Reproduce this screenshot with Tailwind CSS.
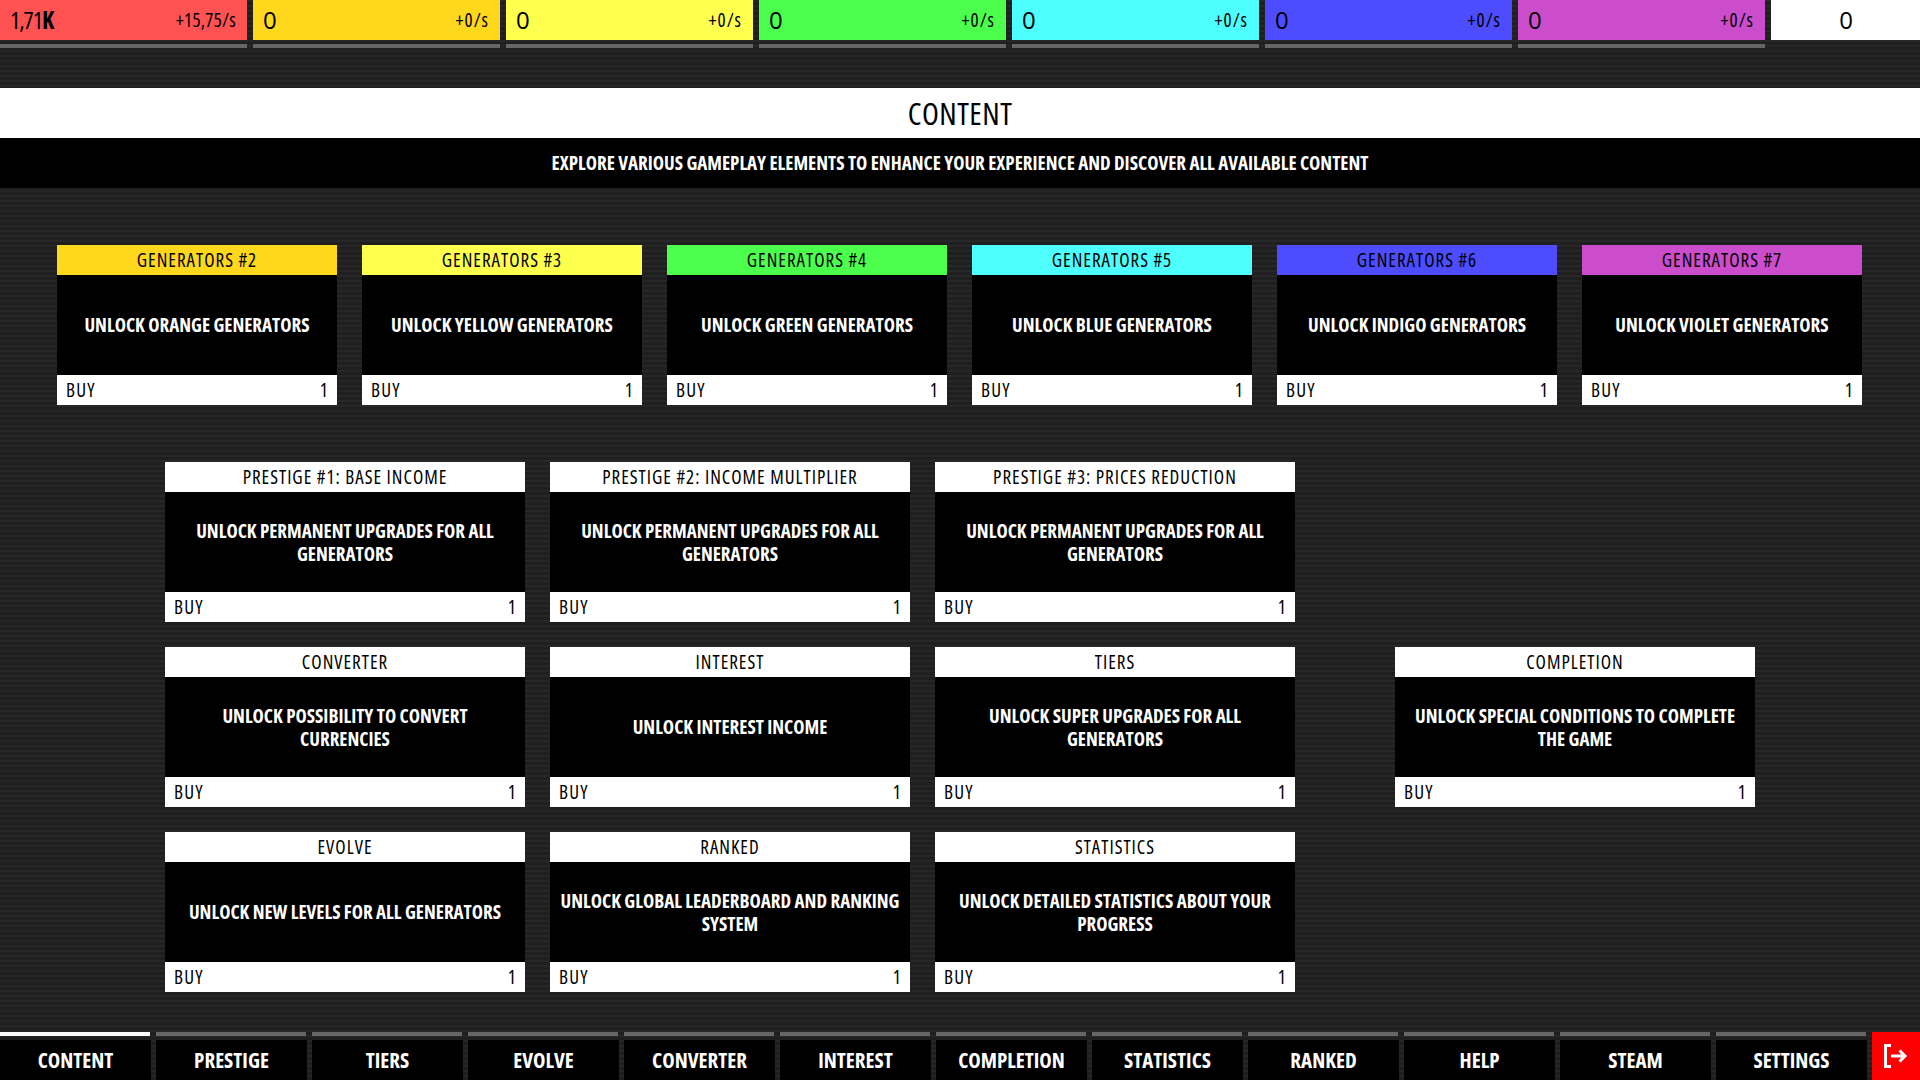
<!DOCTYPE html>
<html lang="en">
<head>
  <meta charset="UTF-8" />
  <meta name="viewport" content="width=device-width, initial-scale=1.0"/>
  <title>Content</title>
  <script src="https://cdn.jsdelivr.net/npm/@tailwindcss/browser@4"></script>
</head>
<body class="w-[1920px] h-[1080px] overflow-hidden flex flex-col bg-[#232323] bg-[repeating-linear-gradient(0deg,#1f1f1f_0px,#1f1f1f_3px,#272727_3px,#272727_5px)] font-['Open_Sans',sans-serif] [font-stretch:75%] text-black">
  <!-- currencies -->
  <div id="currencies" class="flex gap-[6px] h-[48px] overflow-hidden shrink-0"></div>

  <!-- title -->
  <div class="mt-[40px] h-[50px] bg-white flex items-center justify-center text-[31px] tracking-[0.5px]">CONTENT</div>
  <div class="h-[50px] bg-black text-white flex items-center justify-center text-[19px] font-bold">EXPLORE VARIOUS GAMEPLAY ELEMENTS TO ENHANCE YOUR EXPERIENCE AND DISCOVER ALL AVAILABLE CONTENT</div>

  <!-- generators -->
  <div id="generators" class="mt-[57px] pr-px flex justify-center gap-[25px]"></div>

  <div class="mt-[57px] flex justify-center gap-[100px]">
    <div id="upgrades" class="grid grid-cols-3 gap-[25px]"></div>
    <div id="side" class="pt-[185px]"></div>
  </div>

  <!-- tabs -->
  <div class="mt-auto flex h-[48px]">
    <div id="tabs" class="flex"></div>
    <div class="w-[48px] bg-[#ff0000] flex items-center justify-center">
      <svg class="w-[24px] h-[24px]" viewBox="0 0 24 24" fill="none" stroke="#ffffff" stroke-width="3">
        <path d="M7 1.5H1.5V22.5H7"/>
        <path d="M7 12H21M15.5 6.5L21 12L15.5 17.5"/>
      </svg>
    </div>
  </div>

  <script>
    const currencies = [
      ['1,71<b>K</b>', '+15,75/s', 'bg-[#ff5252]', 'tracking-[-1px]', 'tracking-[0.3px]'],
      ['0', '+0/s', 'bg-[#ffd71c]', '[font-stretch:100%]', 'tracking-[1px]'],
      ['0', '+0/s', 'bg-[#ffff4d]', '[font-stretch:100%]', 'tracking-[1px]'],
      ['0', '+0/s', 'bg-[#4dff4d]', '[font-stretch:100%]', 'tracking-[1px]'],
      ['0', '+0/s', 'bg-[#4dffff]', '[font-stretch:100%]', 'tracking-[1px]'],
      ['0', '+0/s', 'bg-[#4d4dff]', '[font-stretch:100%]', 'tracking-[1px]'],
      ['0', '+0/s', 'bg-[#cc4dcc]', '[font-stretch:100%]', 'tracking-[1px]']
    ];
    document.getElementById('currencies').innerHTML = currencies.map(c => `
      <div class="w-[247px] shrink-0">
        <div class="h-[40px] pl-[10px] pr-[11px] flex items-center justify-between ${c[2]}">
          <span class="text-[24px] ${c[3]}">${c[0]}</span>
          <span class="pt-px text-[19px] ${c[4]}">${c[1]}</span>
        </div>
        <div class="mt-[4px] h-[4px] bg-[#666666]"></div>
      </div>`).join('') + `
      <div class="w-[150px] shrink-0 h-[40px] bg-white flex items-center justify-center text-[24px] [font-stretch:100%]">0</div>`;

    function card(title, text, head, width) {
      return `
      <div class="${width} flex flex-col">
        <div class="h-[30px] pt-px flex items-center justify-center text-[19px] tracking-[1px] ${head}">${title}</div>
        <div class="h-[100px] pt-px bg-black text-white flex items-center justify-center text-center px-[10px] text-[19px] leading-[23px] font-bold">${text}</div>
        <div class="h-[30px] pt-px bg-white pl-[9px] pr-[8px] flex items-center justify-between text-[19px] tracking-[1.2px]"><span>BUY</span><span>1</span></div>
      </div>`;
    }

    const generators = [
      ['GENERATORS #2', 'UNLOCK ORANGE GENERATORS', 'bg-[#ffd71c]'],
      ['GENERATORS #3', 'UNLOCK YELLOW GENERATORS', 'bg-[#ffff4d]'],
      ['GENERATORS #4', 'UNLOCK GREEN GENERATORS', 'bg-[#4dff4d]'],
      ['GENERATORS #5', 'UNLOCK BLUE GENERATORS', 'bg-[#4dffff]'],
      ['GENERATORS #6', 'UNLOCK INDIGO GENERATORS', 'bg-[#4d4dff]'],
      ['GENERATORS #7', 'UNLOCK VIOLET GENERATORS', 'bg-[#cc4dcc]']
    ];
    document.getElementById('generators').innerHTML = generators.map(g => card(g[0], g[1], g[2], 'w-[280px]')).join('');

    const upgrades = [
      ['PRESTIGE #1: BASE INCOME', 'UNLOCK PERMANENT UPGRADES FOR ALL GENERATORS'],
      ['PRESTIGE #2: INCOME MULTIPLIER', 'UNLOCK PERMANENT UPGRADES FOR ALL GENERATORS'],
      ['PRESTIGE #3: PRICES REDUCTION', 'UNLOCK PERMANENT UPGRADES FOR ALL GENERATORS'],
      ['CONVERTER', 'UNLOCK POSSIBILITY TO CONVERT<br>CURRENCIES'],
      ['INTEREST', 'UNLOCK INTEREST INCOME'],
      ['TIERS', 'UNLOCK SUPER UPGRADES FOR ALL GENERATORS'],
      ['EVOLVE', 'UNLOCK NEW LEVELS FOR ALL GENERATORS'],
      ['RANKED', 'UNLOCK GLOBAL LEADERBOARD AND RANKING SYSTEM'],
      ['STATISTICS', 'UNLOCK DETAILED STATISTICS ABOUT YOUR PROGRESS']
    ];
    document.getElementById('upgrades').innerHTML = upgrades.map(u => card(u[0], u[1], 'bg-white', 'w-[360px]')).join('');
    document.getElementById('side').innerHTML = card('COMPLETION', 'UNLOCK SPECIAL CONDITIONS TO COMPLETE THE GAME', 'bg-white', 'w-[360px]');

    const tabs = ['CONTENT', 'PRESTIGE', 'TIERS', 'EVOLVE', 'CONVERTER', 'INTEREST', 'COMPLETION', 'STATISTICS', 'RANKED', 'HELP', 'STEAM', 'SETTINGS'];
    document.getElementById('tabs').innerHTML = tabs.map((t, i) => `
      <div class="w-[156px] pr-[5px] flex flex-col">
        <div class="h-[4px] w-[150px] ${i === 0 ? 'bg-white' : 'bg-[#666666]'}"></div>
        <div class="mt-[4px] pt-px flex-1 bg-black text-white flex items-center justify-center text-[21px] font-bold">${t}</div>
      </div>`).join('');
  </script>
</body>
</html>
